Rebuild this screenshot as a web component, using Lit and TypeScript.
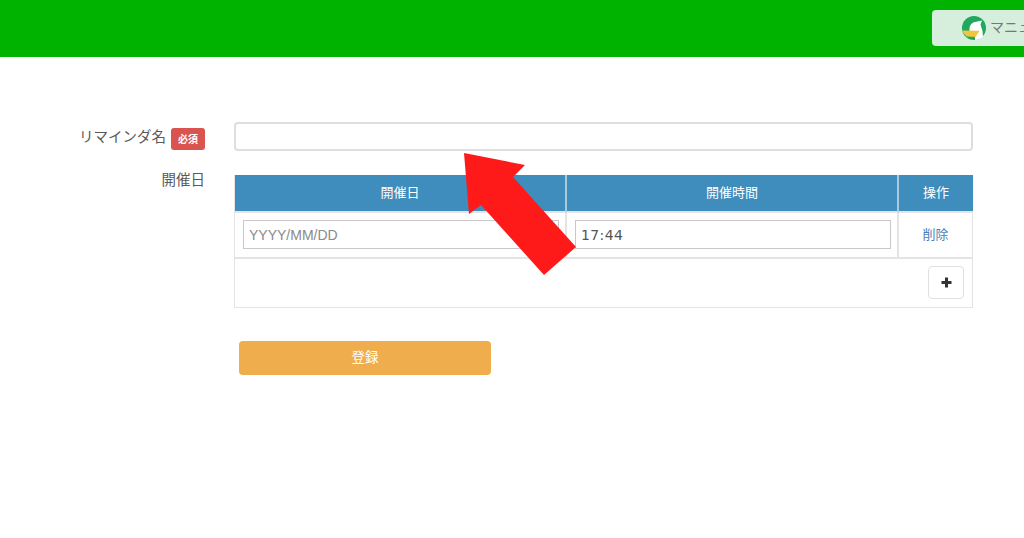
import { LitElement, html, css } from "lit";
import { customElement } from "lit/decorators.js";

@customElement("app-root")
export class AppRoot extends LitElement {
  static styles = css`
    :host {
      display: block;
      position: relative;
      width: 1024px;
      height: 538px;
      overflow: hidden;
      background: #fff;
      font-family: "Open Sans", "Noto Sans CJK JP", sans-serif;
      font-size: 14px;
      color: #555;
    }
    * { box-sizing: border-box; }
    .header {
      height: 57px;
      background: #00b300;
      padding: 10px 0 0 932px;
      overflow: hidden;
      display: flex;
      align-items: flex-start;
    }
    .manual {
      flex: none;
      width: 160px;
      height: 36px;
      border-radius: 4px;
      background: #d6efdc;
      display: flex;
      align-items: center;
      gap: 4px;
      padding-left: 30px;
      color: #777;
      font-size: 14px;
      white-space: nowrap;
    }
    .logo { flex: none; }
    .manual span { padding-bottom: 4px; }
    .form {
      padding: 65px 51px 0 0;
      display: flex;
      flex-direction: column;
    }
    .row { display: flex; }
    .label {
      width: 205px;
      flex: none;
      display: flex;
      justify-content: flex-end;
      align-items: center;
      gap: 5px;
      font-size: 14.5px;
      color: #5a5a5a;
    }
    .label .t { padding-bottom: 2px; }
    .label.top { align-items: flex-start; height: 20px; margin-top: -7px; }
    .req {
      width: 34px;
      height: 22px;
      margin-top: 4px;
      border-radius: 3px;
      background: #d9534f;
      color: #fff;
      font-family: "Noto Sans CJK JP", sans-serif;
      font-weight: 700;
      font-size: 10px;
      display: flex;
      align-items: center;
      justify-content: center;
    }
    .field { margin-left: 29px; width: 739px; }
    .name {
      display: block;
      width: 100%;
      height: 29px;
      border: 2px solid #dedede;
      border-radius: 4px;
      background: #fff;
    }
    .row2 { margin-top: 24px; }
    .grid {
      width: 739px;
      display: grid;
      grid-template-columns: 333px 332px 74px;
    }
    .th {
      height: 38px;
      background: #3e8dbc;
      color: #fff;
      font-size: 13px;
      display: flex;
      align-items: center;
      justify-content: center;
      padding-bottom: 4px;
      border-right: 2px solid #a9c9dd;
      border-bottom: 2px solid #e4e4e4;
    }
    .th:first-child { border-left: 1px solid #e4e4e4; }
    .th:nth-child(3) { border-right: none; }
    .td {
      height: 46px;
      padding: 7px 6px 0 8px;
      border-right: 2px solid #e4e4e4;
      border-bottom: 2px solid #e4e4e4;
      font-size: 13px;
    }
    .td.first { border-left: 1px solid #e4e4e4; }
    .cell {
      height: 29px;
      width: 100%;
      display: block;
      border: 1px solid #c9c9c9;
      background: #fff;
      padding: 0 5px;
      font: 14px "Liberation Sans", "Noto Sans CJK JP", sans-serif;
      color: #555;
      outline: none;
    }
    .cell.time { font-family: "DejaVu Sans", sans-serif; font-size: 14px; letter-spacing: 0.4px; }
    .cell::placeholder { color: #8a8a8a; opacity: 1; }
    .del {
      border-right: 1px solid #e4e4e4;
      text-align: center;
      color: #4a7fb5;
      padding: 11px 0 0;
      font-size: 13px;
      line-height: 20px;
    }
    .addrow {
      grid-column: 1 / -1;
      height: 49px;
      border: 1px solid #e4e4e4;
      border-top: none;
      padding: 7px 8px 0 0;
      display: flex;
      justify-content: flex-end;
      align-items: flex-start;
    }
    .plus {
      width: 36px;
      height: 33px;
      border: 1px solid #e0e0e0;
      border-radius: 4px;
      background: #fff;
      display: flex;
      align-items: center;
      justify-content: center;
    }
    .submit {
      margin: 33px 0 0 239px;
      width: 252px;
      height: 34px;
      border: none;
      border-radius: 4px;
      background: #f0ad4e;
      color: #fff;
      padding: 0 0 4px;
      font: 13.5px "Noto Sans CJK JP", sans-serif;
    }
    .arrow {
      position: absolute;
      left: 0;
      top: 0;
      pointer-events: none;
    }
  `;

  render() {
    return html`
      <div class="header">
        <div class="manual">
          <svg class="logo" width="24" height="24" viewBox="0 0 24 24">
            <circle cx="12" cy="12" r="12" fill="#1fa85e"></circle>
            <path d="M7.500 15 C7 10 9.500 6.500 13 6 L20 4.500 L18.500 8.500 L20.500 15 L21 20.500 A12 12 0 0 1 13 24 L13 21 Z" fill="#fff"></path>
            <path d="M0.400 14.500 L17.600 14.800 L13.500 21 L5 20.500 C3 19 1 17 0.400 14.500Z" fill="#efc63c"></path>
          </svg>
          <span>マニュアル</span>
        </div>
      </div>
      <div class="form">
        <div class="row">
          <div class="label"><span class="t">リマインダ名</span><span class="req">必須</span></div>
          <div class="field"><div class="name"></div></div>
        </div>
        <div class="row row2">
          <div class="label top">開催日</div>
          <div class="field">
            <div class="grid">
              <div class="th">開催日</div>
              <div class="th">開催時間</div>
              <div class="th">操作</div>
              <div class="td first"><input class="cell" placeholder="YYYY/MM/DD" /></div>
              <div class="td"><input class="cell time" .value=${"17:44"} /></div>
              <div class="td del">削除</div>
              <div class="addrow">
                <div class="plus">
                  <svg width="11" height="11" viewBox="0 0 11 11"><path d="M4 0.5h3v3.5h3.5v3H7v3.5H4V7H0.5V4H4z" fill="#333"></path></svg>
                </div>
              </div>
            </div>
          </div>
        </div>
        <button class="submit">登録</button>
      </div>
      <svg class="arrow" width="1024" height="538" viewBox="0 0 1024 538">
        <polygon points="464,153 525,165 513,177 576,247 544,275 481,205 469,214" fill="#ff1a1a"></polygon>
      </svg>
    `;
  }
}
